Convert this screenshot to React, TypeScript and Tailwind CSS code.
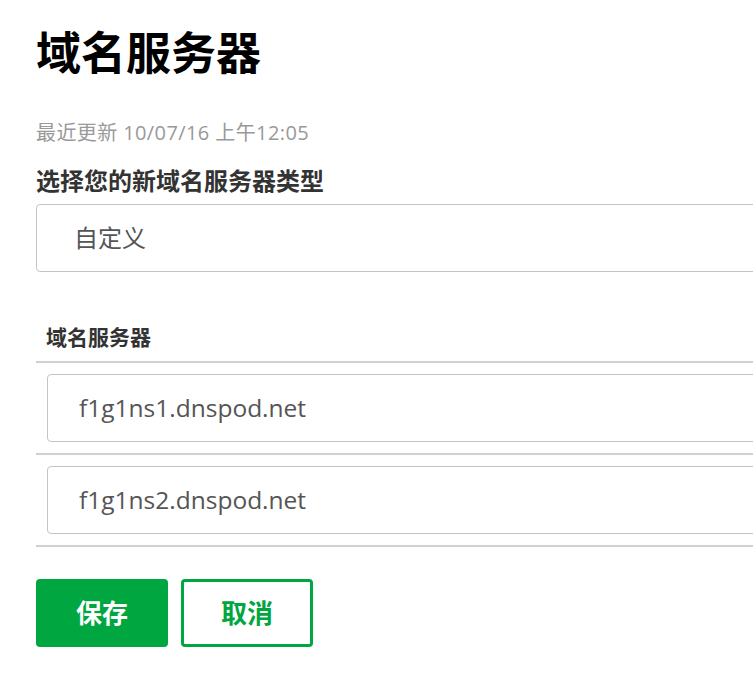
import React from 'react'

const cjk = "font-['Open_Sans','Noto_Sans_CJK_SC',sans-serif]"

const servers = ['f1g1ns1.dnspod.net', 'f1g1ns2.dnspod.net']

export default function App() {
  return (
    <div className={`w-[753px] h-[681px] overflow-hidden bg-white ${cjk}`}>
      <div className="w-[820px] pl-9 pt-[30px]">
        <h1 className="text-[45px] leading-[45px] font-bold text-black">域名服务器</h1>

        <p className="mt-[48px] text-[20px] leading-[20px] text-[#999999] tracking-[0.4px]">
          最近更新 10/07/16 上午12:05
        </p>

        <h2 className="mt-[26px] text-[24px] leading-[24px] font-bold text-[#333333]">
          选择您的新域名服务器类型
        </h2>

        {/* type select */}
        <div className="mt-[11px] h-[68px] flex items-center rounded-[4px] border border-[#c4c4c4] pl-[37px] text-[24px] text-[#555555]">
          自定义
        </div>

        {/* name servers */}
        <div className="mt-[55px] border-b-2 border-[#d0d0d0] pb-[14px] pl-[10px]">
          <span className="block text-[21px] leading-[20px] font-bold text-[#333333]">域名服务器</span>
        </div>
        {servers.map((s) => (
          <div key={s} className="py-[11px] pl-[11px] border-b-2 border-[#d0d0d0]">
            <div className="h-[68px] flex items-center rounded-[4px] border border-[#c4c4c4] pl-[31px] text-[24.5px] text-[#555555]">
              {s}
            </div>
          </div>
        ))}

        <div className="mt-[32px] flex gap-[13px]">
          <button className="w-[132px] h-[68px] rounded-[4px] bg-[#00a640] text-white text-[26px] font-bold">
            保存
          </button>
          <button className="w-[132px] h-[68px] rounded-[4px] border-[3px] border-[#00a640] bg-white text-[#00a640] text-[26px] font-bold">
            取消
          </button>
        </div>
      </div>
    </div>
  )
}
